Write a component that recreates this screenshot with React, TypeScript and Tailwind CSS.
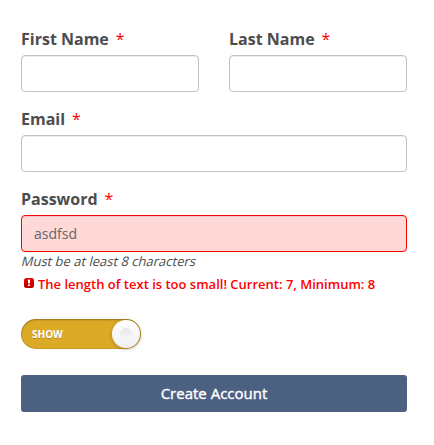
import React, { useState } from 'react';

interface FieldProps {
  id: string;
  label: string;
  type?: string;
  value: string;
  invalid?: boolean;
  onChange: (value: string) => void;
}

const Field: React.FC<FieldProps> = ({ id, label, type = 'text', value, invalid = false, onChange }) => (
  <div>
    <label htmlFor={id} className="flex h-[24px] mb-[4px] gap-[7px] text-[16px] leading-[24px] font-bold text-[#4d4d4d]">
      <span>{label}</span>
      <span className="font-normal text-[#ff0000]">*</span>
    </label>
    <input
      id={id}
      type={type}
      value={value}
      onChange={e => onChange(e.target.value)}
      className={`block w-full h-[37px] px-3 rounded-[4px] border text-[14px] text-[#666] outline-none shadow-[inset_0_1px_1px_rgba(0,0,0,0.075)] ${
        invalid ? 'border-[#fa0000] bg-[#ffd8d8]' : 'border-[#c2c2c2] bg-white'
      }`}
    />
  </div>
);

// Rounded red badge with an exclamation mark
const ErrorIcon = () => (
  <svg width="10" height="10" viewBox="0 0 10 10" className="shrink-0 -mt-[2px]">
    <defs>
      <linearGradient id="badge" x1="0" y1="0" x2="0" y2="1">
        <stop offset="0" stopColor="#e80000" />
        <stop offset="1" stopColor="#b80000" />
      </linearGradient>
    </defs>
    <rect width="10" height="10" rx="2.5" fill="url(#badge)" />
    <rect x="4" y="1.5" width="2" height="4" fill="#fff" />
    <rect x="4" y="6.5" width="2" height="1.5" fill="#fff" />
  </svg>
);

export default function App() {
  const [form, setForm] = useState({ first: '', last: '', email: '', password: 'asdfsd' });
  const [show, setShow] = useState(true);

  const update = (key: keyof typeof form) => (value: string) => setForm({ ...form, [key]: value });

  return (
    <form
      onSubmit={e => e.preventDefault()}
      className="w-[434px] h-[445px] bg-white pl-[21px] pr-[27px] pt-[27px] font-['Open_Sans',sans-serif]"
    >
      <div className="grid grid-cols-2 gap-x-[30px] mb-[15px]">
        <Field id="first" label="First Name" value={form.first} onChange={update('first')} />
        <Field id="last" label="Last Name" value={form.last} onChange={update('last')} />
      </div>
      <div className="mb-[15px]">
        <Field id="email" label="Email" value={form.email} onChange={update('email')} />
      </div>
      <Field
        id="password"
        label="Password"
        type={show ? 'text' : 'password'}
        value={form.password}
        invalid
        onChange={update('password')}
      />
      <p className="h-[20px] pl-px text-[13px] leading-[18px] text-[#4d4d4d]">
        <span className="inline-block -skew-x-[14deg]">Must be at least 8 characters</span>
      </p>
      <div className="flex h-[24px] items-center gap-1 pl-[3px] text-[13px] leading-[24px] font-semibold text-[#ff0000]">
        <ErrorIcon />
        <span className="whitespace-nowrap">The length of text is too small! Current: 7, Minimum: 8</span>
      </div>

      <button
        type="button"
        role="switch"
        aria-checked={show}
        onClick={() => setShow(!show)}
        className="flex items-center justify-between w-[120px] h-[30px] mt-[23px] pl-[11px] pr-px rounded-full bg-[#dcaa27] shadow-[inset_0_1px_2px_rgba(0,0,0,0.25),inset_0_0_2px_rgba(0,0,0,0.25)]"
      >
        <span className="text-[10px] leading-[30px] font-bold text-white [text-shadow:0_1px_rgba(0,0,0,0.2)]">SHOW</span>
        <span className="flex items-center justify-center w-[28px] h-[28px] rounded-full bg-linear-to-b from-white to-[#f0f0f0] shadow-[0_1px_4px_rgba(0,0,0,0.25)]">
          <span className="w-3 h-3 rounded-full bg-linear-to-b from-[#eaeaea] to-[#f6f6f6] shadow-[inset_0_1px_rgba(0,0,0,0.02)]" />
        </span>
      </button>

      <button
        type="submit"
        className="block w-full h-[37px] mt-[26px] rounded-[3px] bg-[#4c6082] text-[15px] leading-[37px] text-white [-webkit-text-stroke:0.4px_white]"
      >
        Create Account
      </button>
    </form>
  );
}
